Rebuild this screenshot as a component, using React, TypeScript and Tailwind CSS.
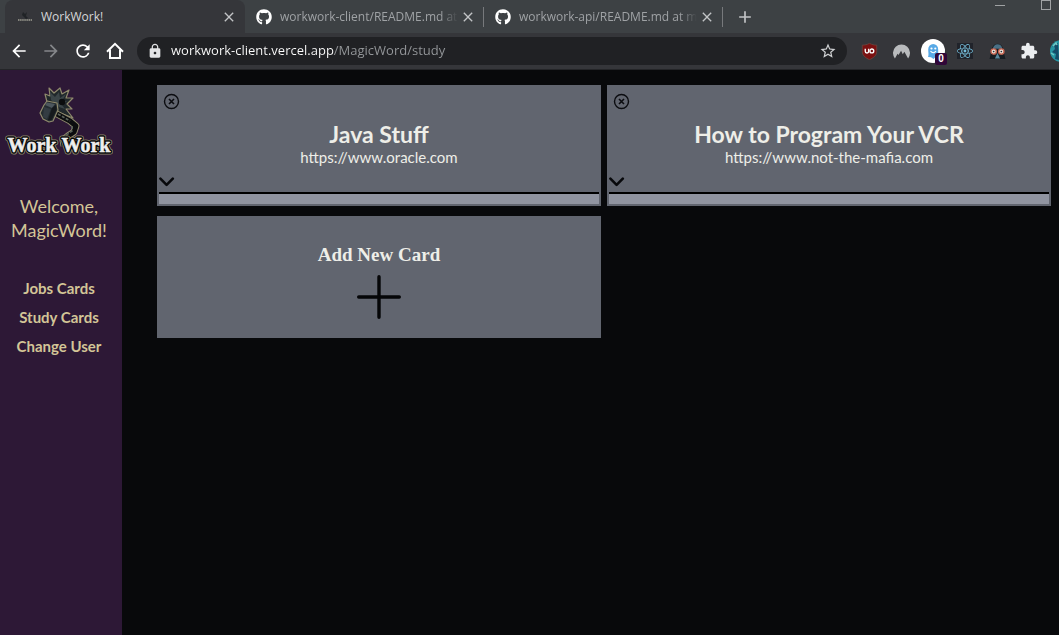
import type { ReactNode } from "react";
import {
  MdAdd,
  MdArrowBack,
  MdArrowForward,
  MdClose,
  MdExtension,
  MdLock,
  MdRefresh,
  MdStarBorder,
} from "react-icons/md";
import { FaGithub, FaReact } from "react-icons/fa";

type StudyCardData = { title: string; url: string };

const cards: StudyCardData[] = [
  { title: "Java Stuff", url: "https://www.oracle.com" },
  { title: "How to Program Your VCR", url: "https://www.not-the-mafia.com" },
];

function Logo({ className }: { className?: string }) {
  return (
    <svg viewBox="0 0 108 76" className={className} role="img" aria-label="Work Work">
      <path
        d="M40 9 L45 11 L44 3 L49 8 L55 3 L57 9 L64 5 L61 13 L68 13 L62 19 L67 24 L61 24 L68 33 L58 29 L50 26 L42 17 Z"
        fill="#20282b"
        stroke="#8f8a6d"
        strokeWidth="1.2"
        strokeLinejoin="round"
      />
      <path d="M46 15 L45 7 L50 12 L54 7 L55 13 L61 9 L57 16 L62 16 L57 20 L60 24 L54 22 Z" fill="#3b4548" />
      <circle cx="57" cy="17" r="3.2" fill="#0b0d0e" />
      <path
        d="M50 28 L65 36 L71 41 L69 47 L63 51 L58 55 L59 61"
        fill="none"
        stroke="#8f8a6d"
        strokeWidth="7"
        strokeLinejoin="round"
      />
      <path
        d="M50 28 L65 36 L71 41 L69 47 L63 51 L58 55 L59 61"
        fill="none"
        stroke="#0b0c0e"
        strokeWidth="5"
        strokeLinejoin="round"
      />
      <path d="M53 29 L65 36 M67 41 L67 46 L60 51" fill="none" stroke="#59615a" strokeWidth="1.6" strokeDasharray="3 1.5" />
      <path
        d="M39 20 L42 16 L52 18 L53 25 L48 36 L44 37 L38 34 L35 28 Z"
        fill="#242c30"
        stroke="#8f8a6d"
        strokeWidth="1.2"
        strokeLinejoin="round"
      />
      <path d="M40 20 L42 17.5 L50 19 L47 23 Z" fill="#4d575d" />
      <path d="M47 23 L51 20 L51.5 25 L46.5 35 L43 35 Z" fill="#15191c" />
      <path d="M39 22 L46 24 L42 34 L38 32 Z" fill="#333c42" />
      <g
        fontFamily="'Liberation Serif', serif"
        fontWeight="700"
        fontSize="20"
        strokeLinejoin="round"
        textAnchor="middle"
      >
        <g fill="#8d876b" stroke="#8d876b" strokeWidth="5">
          <text x="27" y="67">Work</text>
          <text x="81" y="67">Work</text>
        </g>
        <g fill="#08090a" stroke="#08090a" strokeWidth="3.4">
          <text x="27" y="67">Work</text>
          <text x="81" y="67">Work</text>
        </g>
        <g fill="#eeeeec" stroke="#eeeeec" strokeWidth="0.5">
          <text x="27" y="67">Work</text>
          <text x="81" y="67">Work</text>
        </g>
      </g>
    </svg>
  );
}

function TabFavicon() {
  return (
    <svg viewBox="0 0 16 16" className="size-4 shrink-0" aria-hidden="true">
      <path d="M6 3 L8 5 L10 3 L9 7 L11 9 L9 10 L5 6 Z" fill="#202326" />
      <path d="M1 11 H15" stroke="#85857d" strokeWidth="2" strokeDasharray="1.5 0.6" />
    </svg>
  );
}

function HomeIcon() {
  return (
    <svg viewBox="0 0 20 20" className="size-5" fill="none" stroke="currentColor" strokeWidth="2" aria-hidden="true">
      <path d="M2 10.8 L10 2.8 L18 10.8" />
      <path d="M5 8.5 V17 H15 V8.5" />
    </svg>
  );
}

function Tab({ title, icon, active = false }: { title: string; icon: ReactNode; active?: boolean }) {
  return (
    <div
      className={
        active
          ? "flex h-full w-60 items-center gap-2 rounded-t-lg bg-[#35363a] pr-2 pl-3 text-[#d5d7d9]"
          : "flex h-full w-[239px] items-center pl-[11px] text-[#9fa2a5]"
      }
    >
      {icon}
      <a
        href="#tab"
        className={
          active
            ? "min-w-0 flex-1 overflow-hidden text-xs whitespace-nowrap"
            : "ml-2 min-w-0 flex-1 overflow-hidden mask-r-from-90% text-xs whitespace-nowrap"
        }
      >
        {title}
      </a>
      <button type="button" aria-label={`Close ${title}`} className={active ? "" : "mr-[7px] ml-0.5"}>
        <MdClose className="size-4 text-[#c2c4c6]" />
      </button>
      {!active && <span className="h-5 w-px bg-[#77797c]" />}
    </div>
  );
}

function ShieldIcon() {
  return (
    <svg viewBox="0 0 16 16" className="size-[17px]" aria-hidden="true">
      <path d="M8 0.3 C6 1.5 3.5 2 1.2 2 V8 C1.2 12 4.5 14 8 15.7 C11.5 14 14.8 12 14.8 8 V2 C12.5 2 10 1.5 8 0.3Z" fill="#7b1111" stroke="#6b4a42" strokeWidth="0.7" />
      <path d="M4 5.5 V7.8 A1.6 1.6 0 0 0 7.2 7.8 V5.5" fill="none" stroke="#fff" strokeWidth="1.3" />
      <circle cx="10.2" cy="7.5" r="1.8" fill="none" stroke="#fff" strokeWidth="1.3" />
    </svg>
  );
}

function MountainIcon() {
  return (
    <svg viewBox="0 0 16 16" className="size-[17px]" aria-hidden="true">
      <path d="M1.8 14.5 A8 8 0 1 1 14.2 14.5 L10.7 8.3 L9.2 10.6 L7.6 7.4 L5.2 11.3 L4.3 10.2 Z" fill="#b9bbbd" />
    </svg>
  );
}

function GhostIcon() {
  return (
    <span className="relative block size-6 rounded-full bg-white">
      <svg viewBox="0 0 24 24" className="size-6" aria-hidden="true">
        <path d="M7 18 C8 16 7.2 13 7.2 10.5 A5 5.5 0 0 1 17.2 10.5 C17.2 13 17 16 18 19 L14.5 18 L12.5 20 L10 18.2 Z" fill="#58a9e6" />
        <circle cx="10.5" cy="9.5" r="1.1" fill="#fff" />
        <circle cx="14.3" cy="9.5" r="1.1" fill="#fff" />
        <path d="M9.5 12.2 Q12.3 15.3 15 12.2" fill="none" stroke="#fff" strokeWidth="1.2" />
      </svg>
      <span className="absolute top-3.5 left-3.5 flex h-3 w-3 items-center justify-center rounded-xs bg-[#300638] font-['Liberation_Sans',sans-serif] text-[10px] leading-3 font-bold text-white">
        0
      </span>
    </span>
  );
}

function DisguiseIcon() {
  return (
    <svg viewBox="0 0 16 16" className="size-[17px]" aria-hidden="true">
      <path d="M2.5 7 Q3 1 8 0.8 Q13 1 13.5 7 L15.5 15 H0.5Z" fill="#161d22" />
      <path d="M3.6 5.5 Q4.5 1.2 8 1.2 Q12 1.4 12.6 5.5Z" fill="#4a6f84" />
      <path d="M8 9.5 L10.4 14.5 H5.6Z" fill="#5b8aa0" />
      <circle cx="4.4" cy="8" r="2.5" fill="#f0e4da" stroke="#c56350" strokeWidth="1.3" />
      <circle cx="11.6" cy="8" r="2.5" fill="#f0e4da" stroke="#c56350" strokeWidth="1.3" />
      <circle cx="4.4" cy="8" r="0.8" fill="#27313a" />
      <circle cx="11.6" cy="8" r="0.8" fill="#27313a" />
    </svg>
  );
}

function Avatar() {
  return (
    <svg viewBox="0 0 22 22" className="size-[22px]" aria-hidden="true">
      <circle cx="11" cy="11" r="11" fill="#2695a2" />
      <path d="M1 8 L4 5 L5 9 L2 12 L6 14 L5 19 L9 20 L8 3 L6 4Z" fill="#164c68" />
      <path d="M3 6 L6 3 L7 5 M1 13 L4 15" stroke="#72c9c4" strokeWidth="1.5" fill="none" />
    </svg>
  );
}

function Extension({ label, children }: { label: string; children: ReactNode }) {
  return (
    <button type="button" aria-label={label} className="flex w-8 shrink-0 items-center justify-center">
      {children}
    </button>
  );
}

function BrowserChrome() {
  return (
    <header className="overflow-hidden border-b border-[#242528] bg-[#35363a] font-['Open_Sans',sans-serif]">
      <div className="flex h-[33px] bg-[#3d4144] pl-[5px]">
        <Tab title="WorkWork!" icon={<TabFavicon />} active />
        <Tab title="workwork-client/README.md at master" icon={<FaGithub className="size-4 shrink-0 text-white" />} />
        <Tab title="workwork-api/README.md at master" icon={<FaGithub className="size-4 shrink-0 text-white" />} />
        <button type="button" aria-label="New tab" className="ml-3 text-[#c2c4c6]">
          <MdAdd className="size-5" />
        </button>
        <div className="ml-auto flex items-start gap-9 pr-2">
          <button type="button" aria-label="Minimize" className="pt-[5px]">
            <span className="block h-px w-2.5 bg-[#a0a2a4]" />
          </button>
          <button type="button" aria-label="Maximize">
            <span className="block size-2.5 border border-[#a0a2a4]" />
          </button>
        </div>
      </div>
      <div className="flex h-9 items-center">
        <div className="flex w-[137px] shrink-0 items-center gap-3 pl-[9px] text-white">
          <button type="button" aria-label="Back"><MdArrowBack className="size-5" /></button>
          <button type="button" aria-label="Forward" className="text-[#85878a]"><MdArrowForward className="size-5" /></button>
          <button type="button" aria-label="Reload"><MdRefresh className="size-5" /></button>
          <button type="button" aria-label="Home"><HomeIcon /></button>
        </div>
        <div className="flex h-7 min-w-0 flex-1 items-center rounded-full bg-[#202124] px-2.5">
          <MdLock className="size-4 shrink-0 text-[#e2e3e5]" />
          <input
            type="text"
            aria-label="Address"
            defaultValue="workwork-client.vercel.app/MagicWord/study"
            className="ml-2 min-w-0 flex-1 bg-[linear-gradient(to_right,#ffffff_163px,#95989b_163px)] bg-clip-text text-[13px] text-transparent outline-none"
          />
          <button type="button" aria-label="Bookmark this page">
            <MdStarBorder className="size-[18px] text-[#d0d2d4]" />
          </button>
        </div>
        <div className="-mr-[18px] ml-1.5 flex shrink-0 items-center">
          <Extension label="Content blocker"><ShieldIcon /></Extension>
          <Extension label="VPN"><MountainIcon /></Extension>
          <Extension label="Tracker blocker"><GhostIcon /></Extension>
          <Extension label="React tools">
            <span className="flex size-4 items-center justify-center bg-[#20232a]">
              <FaReact className="size-4 text-[#75bdda]" />
            </span>
          </Extension>
          <Extension label="Disguise"><DisguiseIcon /></Extension>
          <Extension label="Extensions"><MdExtension className="size-[18px] text-[#eceef0]" /></Extension>
          <Extension label="Profile"><Avatar /></Extension>
        </div>
      </div>
    </header>
  );
}

function Sidebar() {
  return (
    <aside className="flex w-[122px] shrink-0 flex-col items-center bg-[#2d1836] pt-[15px] pr-1 text-center text-[#d3c597]">
      <Logo className="h-[76px] w-[108px]" />
      <p className="mt-[33px] text-lg leading-6">
        Welcome,
        <br />
        MagicWord!
      </p>
      <nav className="mt-8 flex flex-col text-[15px] leading-[29px] font-bold">
        <a href="#jobs">Jobs Cards</a>
        <a href="#study">Study Cards</a>
        <a href="#user">Change User</a>
      </nav>
    </aside>
  );
}

function StudyCard({ title, url }: StudyCardData) {
  return (
    <article className="flex flex-col bg-[#61656f] p-0.5">
      <button type="button" aria-label={`Delete ${title}`} className="mt-1.5 ml-1 self-start">
        <svg viewBox="0 0 17 17" className="size-[17px]" fill="none" stroke="#0b0c10" aria-hidden="true">
          <circle cx="8.5" cy="8.5" r="7" strokeWidth="1.4" />
          <path d="M6 6 L11 11 M11 6 L6 11" strokeWidth="1.6" />
        </svg>
      </button>
      <div className="mt-2.5 text-center text-[#eeeee8]">
        <h2 className="text-[23px] leading-7 font-bold">{title}</h2>
        <a href={url} className="block text-[15px] leading-[18px]">{url}</a>
      </div>
      <button type="button" aria-label={`Expand ${title}`} className="mt-2.5 mb-1 self-start">
        <svg viewBox="0 0 16 12" className="h-3 w-4" fill="none" stroke="#07080b" strokeWidth="2.6" strokeLinecap="round" strokeLinejoin="round" aria-hidden="true">
          <path d="M1.4 2.6 L7.6 8.8 L13.8 2.6" />
        </svg>
      </button>
      <div className="h-3 border-t-2 border-black bg-[#9094a0]" />
    </article>
  );
}

function AddCard() {
  return (
    <button type="button" className="flex h-[122px] flex-col items-center bg-[#61656f] pt-7">
      <span className="font-['Liberation_Serif',serif] text-[19px] leading-[22px] font-bold text-[#eeeee8]">Add New Card</span>
      <svg viewBox="0 0 44 44" className="mt-[9px] size-11" stroke="#050608" strokeWidth="3.4" strokeLinecap="round" aria-hidden="true">
        <path d="M22 1.7 V42.3 M1.7 22 H42.3" />
      </svg>
    </button>
  );
}

export default function App() {
  return (
    <div className="flex min-h-screen flex-col bg-[#08090b]">
      <BrowserChrome />
      <div className="flex flex-1 font-['Lato',sans-serif]">
        <Sidebar />
        <main className="grid flex-1 auto-rows-max grid-cols-2 gap-x-1.5 gap-y-2.5 pt-[15px] pr-2 pl-[35px]">
          {cards.map((card) => (
            <StudyCard key={card.title} {...card} />
          ))}
          <AddCard />
        </main>
      </div>
    </div>
  );
}
